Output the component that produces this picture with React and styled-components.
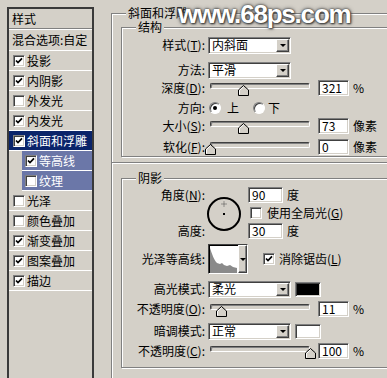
import React from 'react';
import styled, { createGlobalStyle, css } from 'styled-components';

const GlobalStyle = createGlobalStyle`
  html, body {
    margin: 0;
    padding: 0;
    background: #d4d0c8;
  }
  body {
    font-family: "Noto Sans CJK SC", "Liberation Sans", sans-serif;
    font-size: 12px;
    line-height: 16px;
    color: #000;
  }
`;

const sunken = css`
  border: 1px solid;
  border-color: #808080 #fff #fff #808080;
  box-shadow: inset 1px 1px 0 #404040, inset -1px -1px 0 #d4d0c8;
`;

const raised = css`
  border: 1px solid;
  border-color: #fff #404040 #404040 #fff;
  box-shadow: inset -1px -1px 0 #808080;
`;

const Dialog = styled.div`
  position: relative;
  display: flex;
  align-items: flex-start;
  width: 387px;
  height: 378px;
  overflow: hidden;
  background: #d4d0c8;
`;

/* ---------- left style list ---------- */

const StyleList = styled.div`
  flex: 0 0 87px;
  box-sizing: border-box;
  height: 380px;
  margin: 7px 0 0 7px;
  border: 2px solid #3a3a3a;
  border-bottom: none;
`;

const ListHeader = styled.div`
  height: 19px;
  line-height: 19px;
  padding-left: 3px;
  border-bottom: 1px solid #808080;
  box-shadow: 0 1px 0 #fff;
`;

const ListItem = styled.div`
  display: flex;
  align-items: center;
  gap: 2px;
  height: ${p => (p.$tall ? 20 : 19)}px;
  margin-top: ${p => (p.$tall ? 1 : 0)}px;
  margin-left: ${p => (p.$sub ? 13 : 0)}px;
  padding-left: ${p => (p.$check ? (p.$sub ? 3 : 4) : 3)}px;
  border-bottom: 1px solid #fff;
  white-space: nowrap;
  background: ${p => (p.$active ? '#0a246a' : p.$sub ? '#6b77a8' : 'transparent')};
  color: ${p => (p.$active || p.$sub ? '#fff' : '#000')};
`;

const Box = styled.span`
  flex: 0 0 auto;
  display: inline-flex;
  align-items: center;
  justify-content: center;
  width: 12px;
  height: 12px;
  box-sizing: border-box;
  background: #fff;
  ${sunken}
  margin-left: ${p => p.$ml || 0}px;
`;

const Check = ({ checked, ml }) => (
  <Box $ml={ml}>
    {checked && (
      <svg width="8" height="8" viewBox="0 0 8 8">
        <path d="M1 3.5 L3 5.6 L7 1.4" fill="none" stroke="#000" strokeWidth="1.7" />
      </svg>
    )}
  </Box>
);

const Radio = styled.span`
  flex: 0 0 auto;
  display: inline-flex;
  align-items: center;
  justify-content: center;
  width: 12px;
  height: 12px;
  box-sizing: border-box;
  border-radius: 50%;
  background: #fff;
  border: 1px solid;
  border-color: #808080 #fff #fff #808080;
  box-shadow: inset 1px 1px 0 #404040;
  margin-left: ${p => p.$ml || 0}px;
  &::after {
    content: '';
    width: 4px;
    height: 4px;
    border-radius: 50%;
    background: ${p => (p.$on ? '#000' : 'transparent')};
  }
`;

/* ---------- right settings ---------- */

const Settings = styled.div`
  flex: 1;
  min-width: 0;
  margin: 13px 0 0 17px;
`;

const Frame = styled.div`
  min-height: 380px;
  margin-right: -40px;
  border-top: 1px solid #808080;
  border-left: 1px solid #808080;
  box-shadow: inset 1px 1px 0 #fff;
`;

const Group = styled.div`
  margin: ${p => p.$mt || 0}px -40px 0 9px;
  padding-bottom: ${p => p.$pb || 0}px;
  border: 1px solid #808080;
  box-shadow: inset 1px 1px 0 #fff, 1px 1px 0 #fff;
`;

const Legend = styled.div`
  width: fit-content;
  height: 14px;
  line-height: 14px;
  margin: -8px 0 0 14px;
  padding: 0 2px;
  background: #d4d0c8;
  white-space: nowrap;
`;

const Divider = styled.div`
  margin-top: 5px;
  border-top: 1px solid #808080;
  border-bottom: 1px solid #fff;
`;

const FieldRow = styled.div`
  display: flex;
  align-items: center;
  height: ${p => p.$h || 16}px;
  margin-top: ${p => p.$mt || 0}px;
  white-space: nowrap;
`;

const FieldLabel = styled.span`
  flex: 0 0 86px;
  box-sizing: border-box;
  padding-right: 3px;
  text-align: right;
  white-space: nowrap;
`;

const Key = styled.span`
  text-decoration: underline;
`;

const Select = styled.div`
  display: flex;
  align-items: center;
  box-sizing: border-box;
  width: 83px;
  height: 17px;
  padding: 0 1px 0 3px;
  background: #fff;
  ${sunken}
`;

const SelectText = styled.span`
  flex: 1;
`;

const DropButton = styled.span`
  display: flex;
  align-items: center;
  justify-content: center;
  width: 13px;
  height: 13px;
  box-sizing: border-box;
  background: #d4d0c8;
  ${raised}
  &::after {
    content: '';
    border-left: 3px solid transparent;
    border-right: 3px solid transparent;
    border-top: 3px solid #000;
    margin-top: 1px;
  }
`;

const SliderWrap = styled.div`
  position: relative;
  width: 104px;
  height: 16px;
`;

const Track = styled.div`
  box-sizing: border-box;
  height: 6px;
  margin: 3px 2px 0;
  border: 1px solid;
  border-color: #404040 #fff #fff #404040;
  border-radius: 2px;
  background: #d4d0c8;
  box-shadow: inset 1px 1px 0 #808080;
`;

const Thumb = styled.svg`
  position: absolute;
  top: 5px;
`;

const Slider = ({ pos }) => (
  <SliderWrap>
    <Track />
    <Thumb width="11" height="11" viewBox="0 0 11 11" style={{ left: 2 + pos * 100 - 5.5 }}>
      <path d="M0.5 10.5 V5 L5.5 0.5 L10.5 5 V10.5 Z" fill="#d4d0c8" stroke="#000" />
      <path d="M1.5 9.5 V5.4 L5.5 1.8" fill="none" stroke="#fff" />
    </Thumb>
  </SliderWrap>
);

const NumBox = styled.div`
  box-sizing: border-box;
  width: ${p => p.$w || 31}px;
  height: 16px;
  margin-left: ${p => p.$ml || 0}px;
  padding-left: 3px;
  line-height: 14px;
  background: #fff;
  ${sunken}
`;

const Unit = styled.span`
  margin-left: ${p => p.$ml || 4}px;
`;

const Swatch = styled.div`
  box-sizing: border-box;
  width: 26px;
  height: 15px;
  margin-left: 4px;
  background: ${p => p.$color};
  ${sunken}
`;

const AngleGrid = styled.div`
  display: grid;
  grid-template-columns: 86px 40px 1fr;
  grid-template-rows: 16px 16px 16px;
  row-gap: 2px;
  margin-top: 2px;
  align-items: center;
  white-space: nowrap;
`;

const Dial = styled.svg`
  grid-column: 2;
  grid-row: 1 / 4;
  margin-left: -2px;
  margin-top: 2px;
`;

const Cell = styled.div`
  display: flex;
  align-items: center;
  grid-column: ${p => p.$col};
  grid-row: ${p => p.$row};
`;

const ContourPicker = styled.div`
  display: flex;
  box-sizing: border-box;
  width: 40px;
  height: 30px;
  border: 1px solid;
  border-color: #404040 #fff #fff #404040;
  box-shadow: inset 1px 1px 0 #000;
  background: #fff;
`;

const ContourArrow = styled.span`
  display: flex;
  align-items: center;
  justify-content: center;
  width: 9px;
  box-sizing: border-box;
  background: #d4d0c8;
  ${raised}
  &::after {
    content: '';
    border-left: 3px solid transparent;
    border-right: 3px solid transparent;
    border-top: 3px solid #000;
  }
`;

const Watermark = styled.div`
  position: absolute;
  left: 178px;
  top: 0;
  font: bold 26px/28px "Liberation Sans", Arial, sans-serif;
  letter-spacing: -1.2px;
  color: #fff;
  text-shadow: 0 0 2px #333, 0 0 4px #555, 1px 1px 2px #333;
  white-space: nowrap;
  pointer-events: none;
`;

const listItems = [
  { label: '投影', checked: true },
  { label: '内阴影', checked: true },
  { label: '外发光', checked: false },
  { label: '内发光', checked: true },
  { label: '斜面和浮雕', checked: true, active: true },
  { label: '等高线', checked: true, sub: true },
  { label: '纹理', checked: false, sub: true },
  { label: '光泽', checked: false },
  { label: '颜色叠加', checked: false },
  { label: '渐变叠加', checked: true },
  { label: '图案叠加', checked: true },
  { label: '描边', checked: true },
];

const App = () => {
  return (
    <Dialog>
      <GlobalStyle />
      <StyleList>
        <ListHeader>样式</ListHeader>
        <ListItem $tall>混合选项:自定</ListItem>
        {listItems.map(item => (
          <ListItem key={item.label} $check $sub={item.sub} $active={item.active}>
            <Check checked={item.checked} />
            {item.label}
          </ListItem>
        ))}
      </StyleList>

      <Settings>
        <Frame>
          <Legend>斜面和浮雕</Legend>
          <Group $mt={7} $pb={1}>
            <Legend>结构</Legend>
            <FieldRow $mt={3}>
              <FieldLabel>样式(<Key>T</Key>):</FieldLabel>
              <Select>
                <SelectText>内斜面</SelectText>
                <DropButton />
              </Select>
            </FieldRow>
            <FieldRow $mt={9}>
              <FieldLabel>方法:</FieldLabel>
              <Select>
                <SelectText>平滑</SelectText>
                <DropButton />
              </Select>
            </FieldRow>
            <FieldRow $mt={2}>
              <FieldLabel>深度(<Key>D</Key>):</FieldLabel>
              <Slider pos={0.33} />
              <NumBox $ml={6}>321</NumBox>
              <Unit>%</Unit>
            </FieldRow>
            <FieldRow $mt={4}>
              <FieldLabel>方向:</FieldLabel>
              <Radio $on $ml={1} />
              <Unit $ml={6}>上</Unit>
              <Radio $ml={14} />
              <Unit $ml={3}>下</Unit>
            </FieldRow>
            <FieldRow $mt={2}>
              <FieldLabel>大小(<Key>S</Key>):</FieldLabel>
              <Slider pos={0.33} />
              <NumBox $ml={6}>73</NumBox>
              <Unit>像素</Unit>
            </FieldRow>
            <FieldRow $mt={5}>
              <FieldLabel>软化(<Key>F</Key>):</FieldLabel>
              <Slider pos={0} />
              <NumBox $ml={6}>0</NumBox>
              <Unit>像素</Unit>
            </FieldRow>
          </Group>

          <Divider />

          <Group $mt={14} $pb={8}>
            <Legend>阴影</Legend>
            <AngleGrid>
              <FieldLabel style={{ gridColumn: 1, gridRow: 1 }}>角度(<Key>N</Key>):</FieldLabel>
              <Dial width="36" height="36" viewBox="0 0 36 36">
                <circle cx="18" cy="18" r="16" fill="none" stroke="#000" strokeWidth="2" />
                <rect x="17" y="17" width="2" height="2" fill="#000" />
                <path d="M18 5.5 V10.5 M15.5 8 H20.5" stroke="#444" strokeWidth="1" strokeDasharray="1 1" />
              </Dial>
              <Cell $col={3} $row={1}>
                <NumBox $w={35}>90</NumBox>
                <Unit>度</Unit>
              </Cell>
              <Cell $col={3} $row={2}>
                <Check ml={2} />
                <Unit $ml={5}>使用全局光(<Key>G</Key>)</Unit>
              </Cell>
              <FieldLabel style={{ gridColumn: 1, gridRow: 3 }}>高度:</FieldLabel>
              <Cell $col={3} $row={3}>
                <NumBox $w={35}>30</NumBox>
                <Unit>度</Unit>
              </Cell>
            </AngleGrid>

            <FieldRow $h={30} $mt={5}>
              <FieldLabel>光泽等高线:</FieldLabel>
              <ContourPicker>
                <svg width="29" height="28" viewBox="0 0 29 28">
                  <path d="M1 28 V3 C3 9 5 15 8 18 L11 19 L13 18 L15 20 L18 21 L21 20 L24 22 L28 23 V28 Z" fill="#8a8a8a" />
                </svg>
                <ContourArrow />
              </ContourPicker>
              <Check checked ml={15} />
              <Unit $ml={4}>消除锯齿(<Key>L</Key>)</Unit>
            </FieldRow>

            <FieldRow $mt={7}>
              <FieldLabel>高光模式:</FieldLabel>
              <Select>
                <SelectText>柔光</SelectText>
                <DropButton />
              </Select>
              <Swatch $color="#000" />
            </FieldRow>
            <FieldRow $mt={4}>
              <FieldLabel>不透明度(<Key>O</Key>):</FieldLabel>
              <Slider pos={0.11} />
              <NumBox $ml={6}>11</NumBox>
              <Unit>%</Unit>
            </FieldRow>
            <FieldRow $mt={6}>
              <FieldLabel>暗调模式:</FieldLabel>
              <Select>
                <SelectText>正常</SelectText>
                <DropButton />
              </Select>
              <Swatch $color="#fff" />
            </FieldRow>
            <FieldRow $mt={4}>
              <FieldLabel>不透明度(<Key>C</Key>):</FieldLabel>
              <Slider pos={1} />
              <NumBox $ml={6}>100</NumBox>
              <Unit>%</Unit>
            </FieldRow>
          </Group>
        </Frame>
      </Settings>

      <Watermark>www.68ps.com</Watermark>
    </Dialog>
  );
};

export default App;
